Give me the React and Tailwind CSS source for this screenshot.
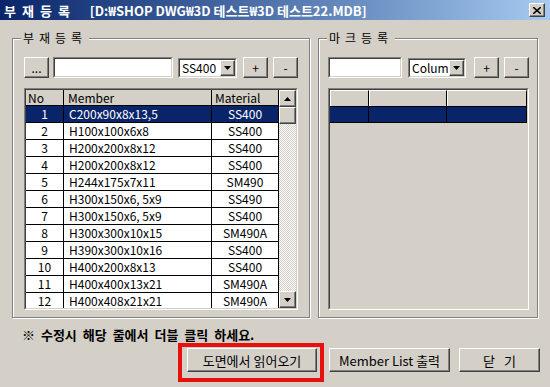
import React from 'react';

const rows = [
  ['1', 'C200x90x8x13,5', 'SS400'],
  ['2', 'H100x100x6x8', 'SS400'],
  ['3', 'H200x200x8x12', 'SS400'],
  ['4', 'H200x200x8x12', 'SS400'],
  ['5', 'H244x175x7x11', 'SM490'],
  ['6', 'H300x150x6, 5x9', 'SS490'],
  ['7', 'H300x150x6, 5x9', 'SS400'],
  ['8', 'H300x300x10x15', 'SM490A'],
  ['9', 'H390x300x10x16', 'SS400'],
  ['10', 'H400x200x8x13', 'SS400'],
  ['11', 'H400x400x13x21', 'SM490A'],
  ['12', 'H400x408x21x21', 'SM490A'],
];

const raised =
  'bg-[#d4d0c8] border border-t-white border-l-white border-r-[#404040] border-b-[#404040] shadow-[inset_-1px_-1px_0_#808080]';

const Btn = ({ className = '', children }) => (
  <div className={`${raised} flex items-center justify-center leading-none text-black ${className}`}>
    {children}
  </div>
);

const Sunken = ({ className = '', innerClass = '', children }) => (
  <div className={`border border-t-[#808080] border-l-[#808080] border-r-white border-b-white ${className}`}>
    <div className={`w-full h-full border border-t-[#404040] border-l-[#404040] border-r-[#d4d0c8] border-b-[#d4d0c8] ${innerClass}`}>
      {children}
    </div>
  </div>
);

const Arrow = ({ up }) => (
  <svg width="7" height="4" viewBox="0 0 7 4">
    <path d={up ? 'M3.5 0 L7 4 L0 4 Z' : 'M0 0 L7 0 L3.5 4 Z'} fill="#000" />
  </svg>
);

const Combo = ({ value, className = '' }) => (
  <Sunken className={`h-[20px] ${className}`} innerClass="bg-white flex items-center">
    <span className="flex-1 min-w-0 overflow-hidden whitespace-nowrap pl-[2px] text-[12px] leading-[16px]">{value}</span>
    <div className={`${raised} w-[15px] h-[16px] flex items-center justify-center shrink-0`}>
      <Arrow />
    </div>
  </Sunken>
);

const Group = ({ label, className = '', children }) => (
  <div className={`relative border border-[#808080] shadow-[inset_1px_1px_0_#fff,1px_1px_0_#fff] ${className}`}>
    <span className="absolute -top-[9px] left-[8px] px-[2px] bg-[#d4d0c8] text-[12px] leading-[16px] tracking-[5px]">
      {label}
    </span>
    {children}
  </div>
);

export default function App() {
  return (
    <div className="w-[550px] h-[387px] bg-[#d4d0c8] overflow-hidden font-['Noto_Sans_CJK_KR',sans-serif] text-black">
      {/* title bar */}
      <div className="h-[20px] flex items-center bg-gradient-to-r from-[#0a246a] to-[#a6caf0] pl-[4px] pr-[5px]">
        <span className="text-white font-bold text-[13px] leading-none tracking-[6px]">부재등록</span>
        <span className="ml-[14px] text-white font-bold text-[13px] leading-none">
          [D:₩SHOP DWG₩3D 테스트₩3D 테스트22.MDB]
        </span>
        <div className={`${raised} ml-auto w-[16px] h-[14px] flex items-center justify-center`}>
          <svg width="8" height="7" viewBox="0 0 8 7">
            <path d="M0 0 L8 7 M8 0 L0 7" stroke="#000" strokeWidth="1.6" />
          </svg>
        </div>
      </div>

      <div className="pt-[18px] px-[12px] flex gap-[8px]">
        {/* 부재 등록 */}
        <Group label="부재등록" className="w-[298px] h-[280px] pl-[11px] pt-[18px]">
          <div className="flex items-center h-[21px] text-[12px]">
            <Btn className="w-[25px] h-[21px]">...</Btn>
            <Sunken className="w-[120px] h-[21px] ml-[4px]" innerClass="bg-white" />
            <Combo value="SS400" className="w-[59px] ml-[5px]" />
            <Btn className="w-[25px] h-[21px] ml-[6px]">+</Btn>
            <Btn className="w-[25px] h-[21px] ml-[5px]">-</Btn>
          </div>

          <Sunken className="w-[274px] h-[222px] mt-[10px]" innerClass="flex overflow-hidden bg-white">
            <div className="w-[253px] text-[12px]">
              <div className="flex h-[16px] bg-[#d4d0c8] border-b border-black leading-[15px]">
                <div className="w-[38px] border-r border-black pl-[2px]">No</div>
                <div className="w-[148px] border-r border-black pl-[4px]">Member</div>
                <div className="w-[67px] border-r border-black pl-[3px]">Material</div>
              </div>
              {rows.map((r, i) => (
                <div
                  key={r[0]}
                  className={`flex h-[17px] border-b border-black leading-[16px] ${
                    i === 0 ? 'bg-[#0a246a] text-white' : 'bg-white'
                  }`}
                >
                  <div className="w-[38px] border-r border-black text-center">{r[0]}</div>
                  <div className="w-[148px] border-r border-black pl-[5px]">{r[1]}</div>
                  <div className="w-[67px] border-r border-black text-center">{r[2]}</div>
                </div>
              ))}
            </div>
            <div className="w-[17px] flex flex-col">
              <div className={`${raised} h-[17px] flex items-center justify-center`}>
                <Arrow up />
              </div>
              <div className={`${raised} h-[17px]`} />
              <div className="flex-1 bg-[image:repeating-conic-gradient(#d4d0c8_0_25%,#ffffff_0_50%)] bg-[length:2px_2px]" />
              <div className={`${raised} h-[17px] flex items-center justify-center`}>
                <Arrow />
              </div>
            </div>
          </Sunken>
        </Group>

        {/* 마크 등록 */}
        <Group label="마크등록" className="w-[220px] h-[280px] pl-[9px] pt-[18px]">
          <div className="flex items-center h-[21px] text-[12px]">
            <Sunken className="w-[74px] h-[21px]" innerClass="bg-white" />
            <Combo value="Column" className="w-[58px] ml-[6px]" />
            <Btn className="w-[25px] h-[21px] ml-[8px]">+</Btn>
            <Btn className="w-[25px] h-[21px] ml-[5px]">-</Btn>
          </div>

          <Sunken className="w-[201px] h-[222px] mt-[10px]" innerClass="bg-[#d4d0c8] overflow-hidden">
            <div className="flex h-[16px]">
              <div className="w-[39px] border-t border-l border-t-white border-l-white border-r border-r-black" />
              <div className="w-[78px] border-t border-l border-t-white border-l-white border-r border-r-black" />
              <div className="flex-1 border-t border-l border-t-white border-l-white border-r border-r-black" />
            </div>
            <div className="flex h-[17px] bg-[#0a246a] border-t border-b border-black">
              <div className="w-[39px] border-r border-black" />
              <div className="w-[78px] border-r border-black" />
              <div className="flex-1 border-r border-black" />
            </div>
          </Sunken>
        </Group>
      </div>

      <div className="pl-[22px] mt-[9px] h-[16px] text-[13px] leading-[16px] font-bold [word-spacing:3px]">
        ※ 수정시 해당 줄에서 더블 클릭 하세요.
      </div>

      <div className="flex justify-end items-start pr-[10px] text-[13px]">
        <div className="border-[4px] border-[#e8100c] pl-[5px] pr-[3px] pt-[1px] pb-[6px]">
          <Btn className="w-[130px] h-[24px]">도면에서 읽어오기</Btn>
        </div>
        <Btn className="w-[121px] h-[24px] ml-[5px] mt-[5px]">Member List 출력</Btn>
        <Btn className="w-[81px] h-[24px] ml-[9px] mt-[5px] [word-spacing:6px]">닫 기</Btn>
      </div>
    </div>
  );
}
